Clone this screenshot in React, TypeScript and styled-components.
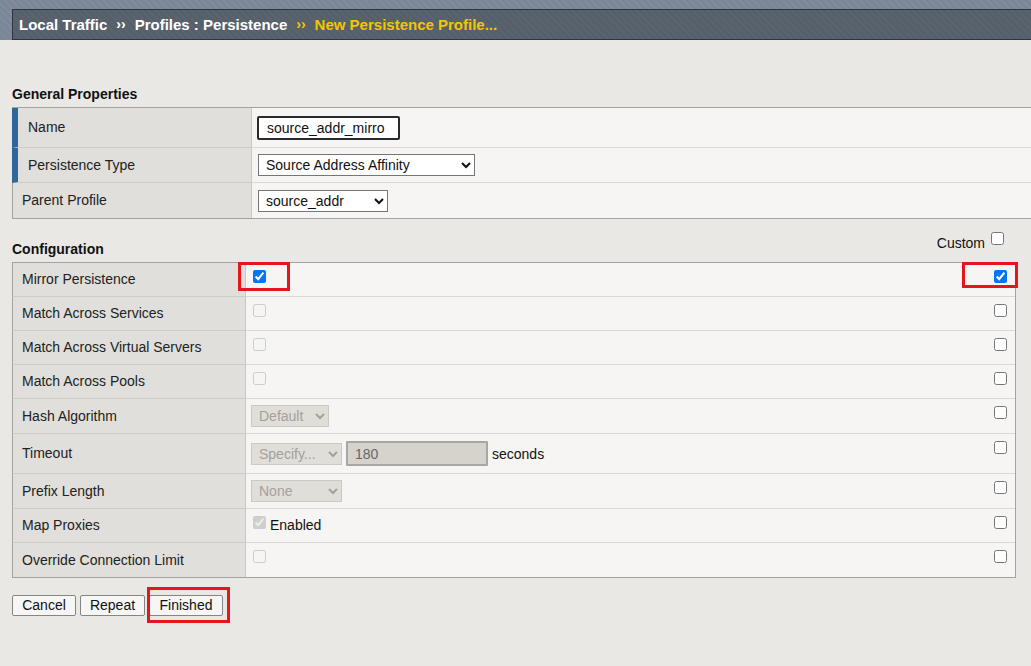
import React from "react";
import styled, { createGlobalStyle } from "styled-components";

const GlobalStyle = createGlobalStyle`
  html, body { margin: 0; padding: 0; background: #e9e8e4; }
  body {
    font-family: "Liberation Sans", Arial, sans-serif;
    font-size: 14px;
    color: #222;
  }
  * { box-sizing: border-box; }
`;

const TopBand = styled.div`
  padding: 9px 0 0 12px;
  background-color: #7b8797;
  background-image: repeating-linear-gradient(
    45deg,
    rgba(255, 255, 255, 0.04) 0 2px,
    transparent 2px 5px
  );
`;

const Breadcrumb = styled.nav`
  height: 31px;
  display: flex;
  align-items: center;
  padding-left: 6px;
  padding-bottom: 1px;
  background-color: #56606b;
  background-image: repeating-linear-gradient(
    45deg,
    rgba(255, 255, 255, 0.025) 0 2px,
    transparent 2px 5px
  );
  border: 1px solid #30353b;
  border-right: none;
  font-size: 15px;
  font-weight: bold;
  color: #fff;
`;

const Crumb = styled.span<{ $current?: boolean }>`
  color: ${(p) => (p.$current ? "#f6c400" : "#ffffff")};
  white-space: nowrap;
`;

const CrumbSep = styled.span<{ $current?: boolean }>`
  margin: 0 9px;
  font-size: 14px;
  color: ${(p) => (p.$current ? "#f6c400" : "#ffffff")};
`;

const Content = styled.main`
  padding: 46px 0 40px 12px;
`;

const SectionTitle = styled.h2`
  margin: 0 0 5px;
  font-size: 14px;
  line-height: 16px;
  font-weight: bold;
  color: #111;
`;

const Table = styled.div<{ $width?: string }>`
  width: ${(p) => p.$width ?? "100%"};
  border-top: 1px solid #a3a3a3;
  border-bottom: 1px solid #a3a3a3;
  border-right: ${(p) => (p.$width ? "1px solid #a3a3a3" : "none")};
`;

const Row = styled.div<{ $cols: string; $h: number; $last?: boolean }>`
  display: grid;
  grid-template-columns: ${(p) => p.$cols};
  height: ${(p) => p.$h}px;
  & > * {
    border-bottom: ${(p) => (p.$last ? "none" : "1px solid #d9d8d5")};
  }
`;

const LabelCell = styled.div<{ $required?: boolean }>`
  display: flex;
  align-items: center;
  padding-bottom: 1px;
  background: #e0dfdb;
  border-left: ${(p) => (p.$required ? "6px solid #2f679b" : "1px solid #a3a3a3")};
  border-right: 1px solid #c9c8c4;
  padding-left: ${(p) => (p.$required ? "10px" : "9px")};
  color: #222;
  white-space: nowrap;
  && { border-bottom-color: #cdccc8; }
`;

const ValueCell = styled.div<{ $pad?: number; $top?: boolean }>`
  display: flex;
  align-items: ${(p) => (p.$top ? "flex-start" : "center")};
  padding-left: ${(p) => p.$pad ?? 6}px;
  padding-top: ${(p) => (p.$top ? 7 : 0)}px;
  background: #f6f5f3;
  gap: 4px;
`;

const CustomCell = styled.div`
  display: flex;
  align-items: flex-start;
  justify-content: flex-end;
  padding: 7px 8px 0 0;
  background: #f6f5f3;
`;

const TextInput = styled.input`
  width: 143px;
  height: 24px;
  margin-left: -1px;
  padding: 0 0 0 8px;
  border: 2px solid #2a2a2a;
  border-radius: 2px;
  background: #fff;
  font-family: "Liberation Sans", Arial, sans-serif;
  font-size: 14px;
  color: #111;
  outline: none;
`;

const Select = styled.select<{ $w: number }>`
  width: ${(p) => p.$w}px;
  height: 22px;
  padding: 0 0 0 3px;
  border: 1px solid #767676;
  border-radius: 0;
  background-color: #fff;
  font-family: "Liberation Sans", Arial, sans-serif;
  font-size: 14px;
  color: #111;
  &:disabled {
    background-color: #e0ded9;
    border-color: #cbc9c4;
    color: #a3a19d;
    opacity: 1;
  }
`;

const DisabledInput = styled.input`
  width: 142px;
  height: 25px;
  padding: 0 0 0 7px;
  border: 2px solid #a9a7a2;
  border-radius: 1px;
  background: #d6d3cd;
  font-family: "Liberation Sans", Arial, sans-serif;
  font-size: 14px;
  color: #666;
`;

const Check = styled.input.attrs({ type: "checkbox" })`
  width: 13px;
  height: 13px;
  margin: 0 0 0 1px;
`;

const InlineText = styled.span<{ $offset?: number }>`
  color: #111;
  margin-top: ${(p) => p.$offset ?? 0}px;
`;

const HeadingRow = styled.div`
  width: 1004px;
  height: 43px;
  display: flex;
  justify-content: space-between;
`;

const ConfigTitle = styled(SectionTitle)`
  align-self: flex-end;
  margin-bottom: 5px;
`;

const CustomToggle = styled.label`
  align-self: flex-start;
  display: flex;
  align-items: flex-start;
  gap: 5px;
  padding: 13px 12px 0 0;
  color: #111;
`;

const Annotated = styled.span`
  position: relative;
  display: inline-flex;
`;

const RedBox = styled.span<{ $t: number; $r: number; $b: number; $l: number }>`
  position: absolute;
  top: ${(p) => p.$t}px;
  right: ${(p) => p.$r}px;
  bottom: ${(p) => p.$b}px;
  left: ${(p) => p.$l}px;
  border: 3px solid #e8141c;
  pointer-events: none;
`;

const ButtonRow = styled.div`
  margin-top: 17px;
  display: flex;
  align-items: flex-start;
  gap: 4px;
`;

const Button = styled.button<{ $w: number }>`
  width: ${(p) => p.$w}px;
  height: 21px;
  padding: 0;
  border: 1px solid #858585;
  border-radius: 2px;
  background: #f6f6f6;
  font-family: "Liberation Sans", Arial, sans-serif;
  font-size: 14px;
  line-height: 19px;
  color: #111;
`;

const GEN_COLS = "240px 1fr";
const CFG_COLS = "234px 1fr 40px";

type CfgRow = {
  label: string;
  h: number;
  value: React.ReactNode;
  top?: boolean;
  customChecked?: boolean;
};

export default function App() {
  const rows: CfgRow[] = [
    {
      label: "Mirror Persistence",
      h: 34,
      top: true,
      value: (
        <Annotated>
          <Check defaultChecked />
          <RedBox $t={-8} $r={-24} $b={-8} $l={-14} />
        </Annotated>
      ),
      customChecked: true,
    },
    { label: "Match Across Services", h: 34, top: true, value: <Check disabled /> },
    { label: "Match Across Virtual Servers", h: 34, top: true, value: <Check disabled /> },
    { label: "Match Across Pools", h: 34, top: true, value: <Check disabled /> },
    {
      label: "Hash Algorithm",
      h: 35,
      value: (
        <Select $w={78} disabled defaultValue="Default">
          <option>Default</option>
        </Select>
      ),
    },
    {
      label: "Timeout",
      h: 40,
      value: (
        <>
          <Select $w={91} disabled defaultValue="Specify...">
            <option>Specify...</option>
          </Select>
          <DisabledInput disabled defaultValue="180" />
          <InlineText>seconds</InlineText>
        </>
      ),
    },
    {
      label: "Prefix Length",
      h: 35,
      value: (
        <Select $w={91} disabled defaultValue="None">
          <option>None</option>
        </Select>
      ),
    },
    {
      label: "Map Proxies",
      h: 34,
      top: true,
      value: (
        <>
          <Check disabled defaultChecked />
          <InlineText $offset={1}>Enabled</InlineText>
        </>
      ),
    },
    { label: "Override Connection Limit", h: 34, top: true, value: <Check disabled /> },
  ];

  return (
    <>
      <GlobalStyle />
      <TopBand>
        <Breadcrumb>
          <Crumb>Local Traffic</Crumb>
          <CrumbSep>››</CrumbSep>
          <Crumb>Profiles : Persistence</Crumb>
          <CrumbSep $current>››</CrumbSep>
          <Crumb $current>New Persistence Profile...</Crumb>
        </Breadcrumb>
      </TopBand>

      <Content>
        <SectionTitle>General Properties</SectionTitle>
        <Table>
          <Row $cols={GEN_COLS} $h={40}>
            <LabelCell $required>Name</LabelCell>
            <ValueCell>
              <TextInput defaultValue="source_addr_mirro" />
            </ValueCell>
          </Row>
          <Row $cols={GEN_COLS} $h={35}>
            <LabelCell $required>Persistence Type</LabelCell>
            <ValueCell>
              <Select $w={217} defaultValue="Source Address Affinity">
                <option>Source Address Affinity</option>
              </Select>
            </ValueCell>
          </Row>
          <Row $cols={GEN_COLS} $h={35} $last>
            <LabelCell>Parent Profile</LabelCell>
            <ValueCell>
              <Select $w={130} defaultValue="source_addr">
                <option>source_addr</option>
              </Select>
            </ValueCell>
          </Row>
        </Table>

        <HeadingRow>
          <ConfigTitle>Configuration</ConfigTitle>
          <CustomToggle>
            <InlineText $offset={3}>Custom</InlineText>
            <Check />
          </CustomToggle>
        </HeadingRow>

        <Table $width="1004px">
          {rows.map((r, i) => (
            <Row key={r.label} $cols={CFG_COLS} $h={r.h} $last={i === rows.length - 1}>
              <LabelCell>{r.label}</LabelCell>
              <ValueCell $top={r.top} $pad={r.top ? 6 : 5}>
                {r.value}
              </ValueCell>
              <CustomCell>
                {r.customChecked ? (
                  <Annotated>
                    <Check defaultChecked />
                    <RedBox $t={-8} $r={-11} $b={-5} $l={-31} />
                  </Annotated>
                ) : (
                  <Check />
                )}
              </CustomCell>
            </Row>
          ))}
        </Table>

        <ButtonRow>
          <Button $w={64}>Cancel</Button>
          <Button $w={65}>Repeat</Button>
          <Annotated>
            <Button $w={74}>Finished</Button>
            <RedBox $t={-8} $r={-7} $b={-7} $l={-2} />
          </Annotated>
        </ButtonRow>
      </Content>
    </>
  );
}
